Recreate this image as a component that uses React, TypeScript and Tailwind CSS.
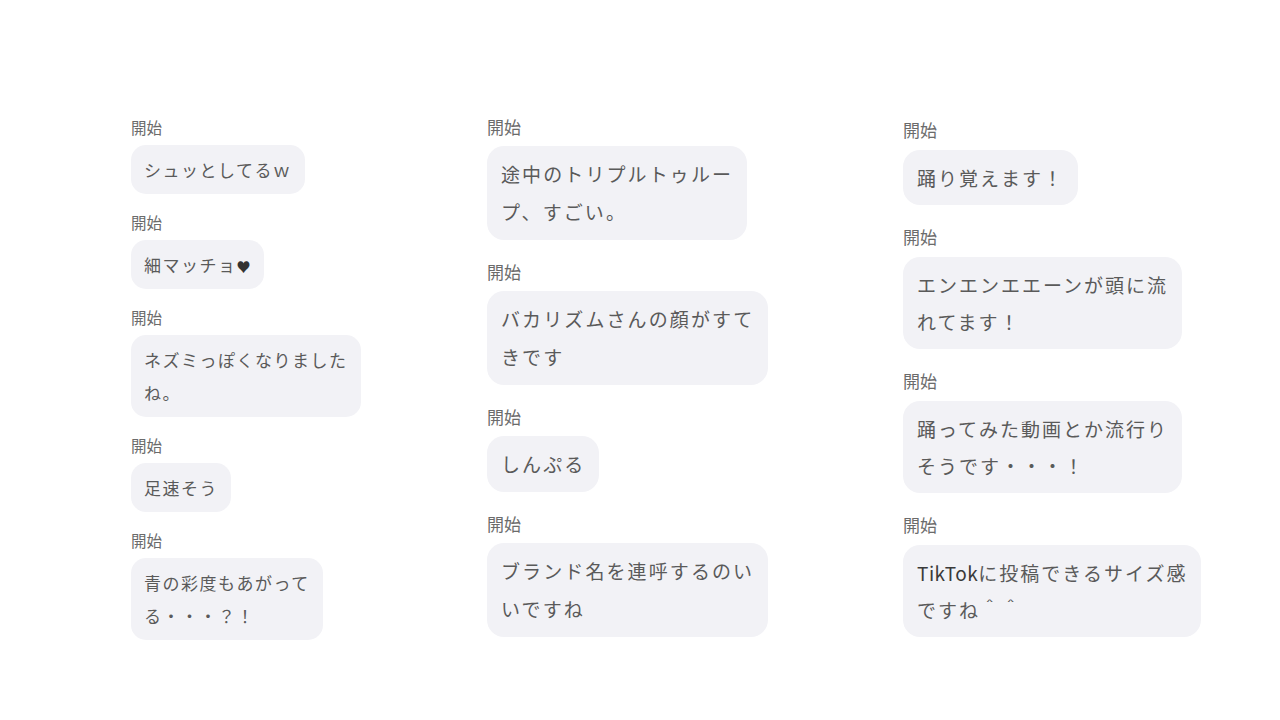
import React from "react";

type Item = { lines: React.ReactNode[] };

const col1: Item[] = [
  { lines: ["シュッとしてるｗ"] },
  { lines: [<>細マッチョ<span className="text-[#333] text-[14px] leading-[0] tracking-[0px]">♥</span></>] },
  { lines: ["ネズミっぽくなりました", "ね。"] },
  { lines: ["足速そう"] },
  { lines: ["青の彩度もあがって", "る・・・？！"] },
];

const col2: Item[] = [
  { lines: ["途中のトリプルトゥルー", "プ、すごい。"] },
  { lines: ["バカリズムさんの顔がすて", "きです"] },
  { lines: ["しんぷる"] },
  { lines: ["ブランド名を連呼するのい", "いですね"] },
];

const col3: Item[] = [
  { lines: ["踊り覚えます！"] },
  { lines: ["エンエンエエーンが頭に流", "れてます！"] },
  { lines: ["踊ってみた動画とか流行り", "そうです・・・！"] },
  { lines: [<><span className="text-[#3a3a3a] tracking-[0.5px]">TikTok</span>に投稿できるサイズ感</>, "ですね＾＾"] },
];

const font = { fontFamily: '"Noto Sans CJK JP", "Noto Sans", sans-serif' };

function SmallCol({ items }: { items: Item[] }) {
  return (
    <div className="flex flex-col gap-[16px] items-start">
      {items.map((it, i) => (
        <div key={i} className="flex flex-col items-start gap-[6px]">
          <div className="text-[15.5px] leading-[24px] text-[#6b6b6b]">開始</div>
          <div className="bg-[#f2f2f6] rounded-[15px] px-[13px] py-[8px] text-[17px] leading-[33px] tracking-[1.5px] text-[#5a5a5a] whitespace-nowrap">
            {it.lines.map((l, j) => (
              <div key={j} className="h-[33px]">{l}</div>
            ))}
          </div>
        </div>
      ))}
    </div>
  );
}

function Col2({ items }: { items: Item[] }) {
  return (
    <div className="flex flex-col gap-[19px] items-start">
      {items.map((it, i) => (
        <div key={i} className="flex flex-col items-start gap-[6px]">
          <div className="text-[17px] leading-[26px] text-[#6b6b6b]">開始</div>
          <div className="bg-[#f2f2f6] rounded-[17px] px-[14px] py-[9px] text-[19px] leading-[38px] tracking-[2.1px] text-[#5a5a5a] whitespace-nowrap">
            {it.lines.map((l, j) => (
              <div key={j}>{l}</div>
            ))}
          </div>
        </div>
      ))}
    </div>
  );
}

function Col3({ items }: { items: Item[] }) {
  return (
    <div className="flex flex-col gap-[19px] items-start">
      {items.map((it, i) => (
        <div key={i} className="flex flex-col items-start gap-[7px]">
          <div className="text-[17px] leading-[26px] text-[#6b6b6b]">開始</div>
          <div className="bg-[#f2f2f6] rounded-[17px] px-[14px] py-[9px] text-[19px] leading-[37px] tracking-[2px] text-[#5a5a5a] whitespace-nowrap">
            {it.lines.map((l, j) => (
              <div key={j}>{l}</div>
            ))}
          </div>
        </div>
      ))}
    </div>
  );
}

export default function App() {
  return (
    <div className="w-[1280px] h-[720px] bg-white overflow-hidden" style={font}>
      <div className="grid grid-cols-[356px_416px_1fr] pl-[131px] items-start">
        <div className="pt-[115px]">
          <SmallCol items={col1} />
        </div>
        <div className="pt-[114px]">
          <Col2 items={col2} />
        </div>
        <div className="pt-[117px]">
          <Col3 items={col3} />
        </div>
      </div>
    </div>
  );
}
